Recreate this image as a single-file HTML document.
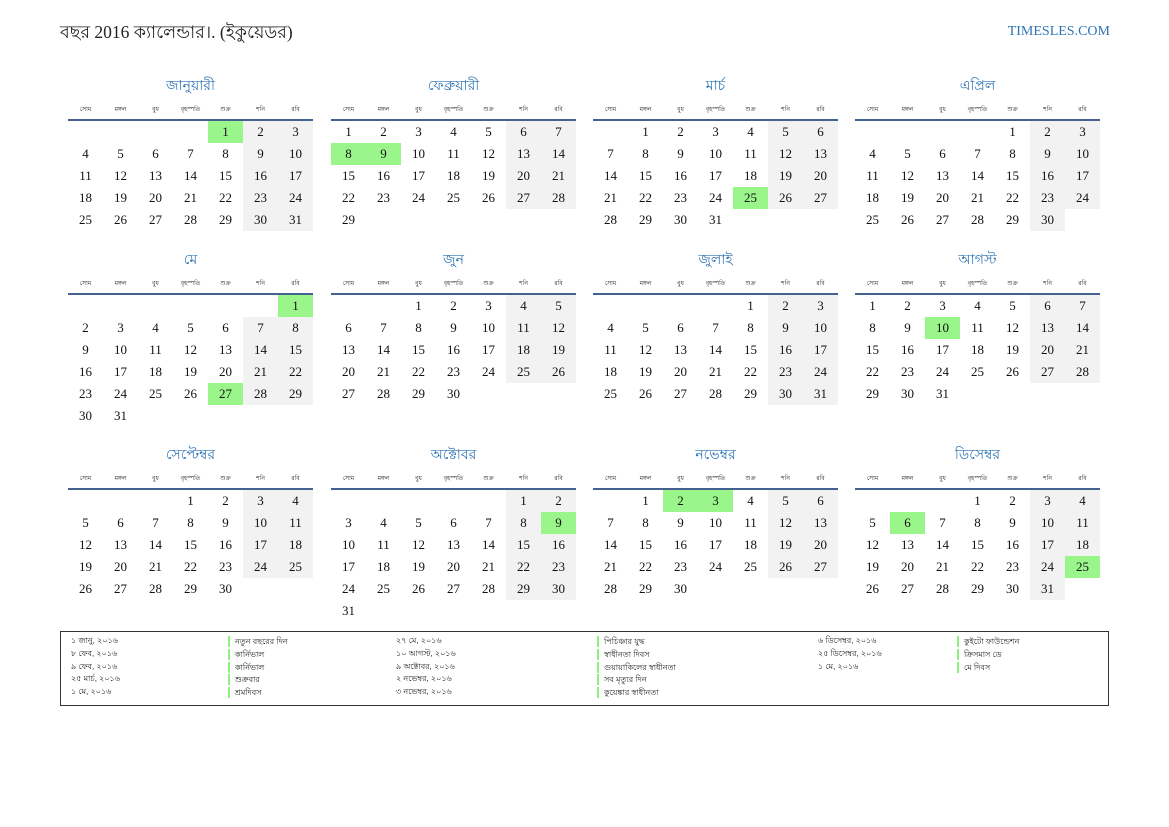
<!DOCTYPE html>
<html><head><meta charset="utf-8">
<style>
body{margin:0;width:1169px;height:827px;background:#fff;position:relative;font-family:"Liberation Serif","Noto Serif CJK SC",serif;overflow:hidden}
.t{position:absolute;left:60px;top:20px;font-size:17.5px;color:#222;white-space:nowrap}
.site{position:absolute;right:59px;top:24px;font-size:14px;color:#2e74b5}
.m{position:absolute;width:245px}
.mt{height:20px;line-height:20px;margin-top:3px;text-align:center;color:#2e74b5;font-size:14px}
.dh{margin-top:5px;height:17px;display:flex;border-bottom:2px solid #44618f}
.dh span{width:35px;text-align:center;font-size:6px;line-height:12px;padding-top:2px;color:#222}
table{border-collapse:collapse;table-layout:fixed}
td{width:35px;height:22px;padding:0;text-align:center;font-size:13px;color:#111}
td.w{background:#f2f2f2}
td.g{background:#9af58a}
.lg{position:absolute;left:60px;top:631px;width:1047px;height:73px;border:1.5px solid #333;font-family:"Liberation Sans",sans-serif;font-size:8px;color:#222}
.c{position:absolute;top:3px;line-height:12.8px;white-space:nowrap}
.c div{height:12.8px}
.b div{border-left:2.5px solid #8ef07f;padding-left:5px;height:11px;margin-bottom:1.8px;line-height:11px}
.b{top:4px}
</style></head><body>
<div class="t">বছর 2016 ক্যালেন্ডার।. (ইকুয়েডর)</div>
<div class="site">TIMESLES.COM</div>

<div class="m" style="left:68px;top:74px"><div class="mt">জানুয়ারী</div><div class="dh"><span>সোম</span><span>মঙ্গল</span><span>বুধ</span><span>বৃহস্পতি</span><span>শুক্র</span><span>শনি</span><span>রবি</span></div><table>
<tr><td></td><td></td><td></td><td></td><td class="g">1</td><td class="w">2</td><td class="w">3</td></tr>
<tr><td>4</td><td>5</td><td>6</td><td>7</td><td>8</td><td class="w">9</td><td class="w">10</td></tr>
<tr><td>11</td><td>12</td><td>13</td><td>14</td><td>15</td><td class="w">16</td><td class="w">17</td></tr>
<tr><td>18</td><td>19</td><td>20</td><td>21</td><td>22</td><td class="w">23</td><td class="w">24</td></tr>
<tr><td>25</td><td>26</td><td>27</td><td>28</td><td>29</td><td class="w">30</td><td class="w">31</td></tr></table></div>

<div class="m" style="left:331px;top:74px"><div class="mt">ফেব্রুয়ারী</div><div class="dh"><span>সোম</span><span>মঙ্গল</span><span>বুধ</span><span>বৃহস্পতি</span><span>শুক্র</span><span>শনি</span><span>রবি</span></div><table>
<tr><td>1</td><td>2</td><td>3</td><td>4</td><td>5</td><td class="w">6</td><td class="w">7</td></tr>
<tr><td class="g">8</td><td class="g">9</td><td>10</td><td>11</td><td>12</td><td class="w">13</td><td class="w">14</td></tr>
<tr><td>15</td><td>16</td><td>17</td><td>18</td><td>19</td><td class="w">20</td><td class="w">21</td></tr>
<tr><td>22</td><td>23</td><td>24</td><td>25</td><td>26</td><td class="w">27</td><td class="w">28</td></tr>
<tr><td>29</td><td></td><td></td><td></td><td></td><td></td><td></td></tr></table></div>

<div class="m" style="left:593px;top:74px"><div class="mt">মার্চ</div><div class="dh"><span>সোম</span><span>মঙ্গল</span><span>বুধ</span><span>বৃহস্পতি</span><span>শুক্র</span><span>শনি</span><span>রবি</span></div><table>
<tr><td></td><td>1</td><td>2</td><td>3</td><td>4</td><td class="w">5</td><td class="w">6</td></tr>
<tr><td>7</td><td>8</td><td>9</td><td>10</td><td>11</td><td class="w">12</td><td class="w">13</td></tr>
<tr><td>14</td><td>15</td><td>16</td><td>17</td><td>18</td><td class="w">19</td><td class="w">20</td></tr>
<tr><td>21</td><td>22</td><td>23</td><td>24</td><td class="g">25</td><td class="w">26</td><td class="w">27</td></tr>
<tr><td>28</td><td>29</td><td>30</td><td>31</td><td></td><td></td><td></td></tr></table></div>

<div class="m" style="left:855px;top:74px"><div class="mt">এপ্রিল</div><div class="dh"><span>সোম</span><span>মঙ্গল</span><span>বুধ</span><span>বৃহস্পতি</span><span>শুক্র</span><span>শনি</span><span>রবি</span></div><table>
<tr><td></td><td></td><td></td><td></td><td>1</td><td class="w">2</td><td class="w">3</td></tr>
<tr><td>4</td><td>5</td><td>6</td><td>7</td><td>8</td><td class="w">9</td><td class="w">10</td></tr>
<tr><td>11</td><td>12</td><td>13</td><td>14</td><td>15</td><td class="w">16</td><td class="w">17</td></tr>
<tr><td>18</td><td>19</td><td>20</td><td>21</td><td>22</td><td class="w">23</td><td class="w">24</td></tr>
<tr><td>25</td><td>26</td><td>27</td><td>28</td><td>29</td><td class="w">30</td><td></td></tr></table></div>

<div class="m" style="left:68px;top:248px"><div class="mt">মে</div><div class="dh"><span>সোম</span><span>মঙ্গল</span><span>বুধ</span><span>বৃহস্পতি</span><span>শুক্র</span><span>শনি</span><span>রবি</span></div><table>
<tr><td></td><td></td><td></td><td></td><td></td><td></td><td class="g">1</td></tr>
<tr><td>2</td><td>3</td><td>4</td><td>5</td><td>6</td><td class="w">7</td><td class="w">8</td></tr>
<tr><td>9</td><td>10</td><td>11</td><td>12</td><td>13</td><td class="w">14</td><td class="w">15</td></tr>
<tr><td>16</td><td>17</td><td>18</td><td>19</td><td>20</td><td class="w">21</td><td class="w">22</td></tr>
<tr><td>23</td><td>24</td><td>25</td><td>26</td><td class="g">27</td><td class="w">28</td><td class="w">29</td></tr>
<tr><td>30</td><td>31</td><td></td><td></td><td></td><td></td><td></td></tr></table></div>

<div class="m" style="left:331px;top:248px"><div class="mt">জুন</div><div class="dh"><span>সোম</span><span>মঙ্গল</span><span>বুধ</span><span>বৃহস্পতি</span><span>শুক্র</span><span>শনি</span><span>রবি</span></div><table>
<tr><td></td><td></td><td>1</td><td>2</td><td>3</td><td class="w">4</td><td class="w">5</td></tr>
<tr><td>6</td><td>7</td><td>8</td><td>9</td><td>10</td><td class="w">11</td><td class="w">12</td></tr>
<tr><td>13</td><td>14</td><td>15</td><td>16</td><td>17</td><td class="w">18</td><td class="w">19</td></tr>
<tr><td>20</td><td>21</td><td>22</td><td>23</td><td>24</td><td class="w">25</td><td class="w">26</td></tr>
<tr><td>27</td><td>28</td><td>29</td><td>30</td><td></td><td></td><td></td></tr></table></div>

<div class="m" style="left:593px;top:248px"><div class="mt">জুলাই</div><div class="dh"><span>সোম</span><span>মঙ্গল</span><span>বুধ</span><span>বৃহস্পতি</span><span>শুক্র</span><span>শনি</span><span>রবি</span></div><table>
<tr><td></td><td></td><td></td><td></td><td>1</td><td class="w">2</td><td class="w">3</td></tr>
<tr><td>4</td><td>5</td><td>6</td><td>7</td><td>8</td><td class="w">9</td><td class="w">10</td></tr>
<tr><td>11</td><td>12</td><td>13</td><td>14</td><td>15</td><td class="w">16</td><td class="w">17</td></tr>
<tr><td>18</td><td>19</td><td>20</td><td>21</td><td>22</td><td class="w">23</td><td class="w">24</td></tr>
<tr><td>25</td><td>26</td><td>27</td><td>28</td><td>29</td><td class="w">30</td><td class="w">31</td></tr></table></div>

<div class="m" style="left:855px;top:248px"><div class="mt">আগস্ট</div><div class="dh"><span>সোম</span><span>মঙ্গল</span><span>বুধ</span><span>বৃহস্পতি</span><span>শুক্র</span><span>শনি</span><span>রবি</span></div><table>
<tr><td>1</td><td>2</td><td>3</td><td>4</td><td>5</td><td class="w">6</td><td class="w">7</td></tr>
<tr><td>8</td><td>9</td><td class="g">10</td><td>11</td><td>12</td><td class="w">13</td><td class="w">14</td></tr>
<tr><td>15</td><td>16</td><td>17</td><td>18</td><td>19</td><td class="w">20</td><td class="w">21</td></tr>
<tr><td>22</td><td>23</td><td>24</td><td>25</td><td>26</td><td class="w">27</td><td class="w">28</td></tr>
<tr><td>29</td><td>30</td><td>31</td><td></td><td></td><td></td><td></td></tr></table></div>

<div class="m" style="left:68px;top:443px"><div class="mt">সেপ্টেম্বর</div><div class="dh"><span>সোম</span><span>মঙ্গল</span><span>বুধ</span><span>বৃহস্পতি</span><span>শুক্র</span><span>শনি</span><span>রবি</span></div><table>
<tr><td></td><td></td><td></td><td>1</td><td>2</td><td class="w">3</td><td class="w">4</td></tr>
<tr><td>5</td><td>6</td><td>7</td><td>8</td><td>9</td><td class="w">10</td><td class="w">11</td></tr>
<tr><td>12</td><td>13</td><td>14</td><td>15</td><td>16</td><td class="w">17</td><td class="w">18</td></tr>
<tr><td>19</td><td>20</td><td>21</td><td>22</td><td>23</td><td class="w">24</td><td class="w">25</td></tr>
<tr><td>26</td><td>27</td><td>28</td><td>29</td><td>30</td><td></td><td></td></tr></table></div>

<div class="m" style="left:331px;top:443px"><div class="mt">অক্টোবর</div><div class="dh"><span>সোম</span><span>মঙ্গল</span><span>বুধ</span><span>বৃহস্পতি</span><span>শুক্র</span><span>শনি</span><span>রবি</span></div><table>
<tr><td></td><td></td><td></td><td></td><td></td><td class="w">1</td><td class="w">2</td></tr>
<tr><td>3</td><td>4</td><td>5</td><td>6</td><td>7</td><td class="w">8</td><td class="g">9</td></tr>
<tr><td>10</td><td>11</td><td>12</td><td>13</td><td>14</td><td class="w">15</td><td class="w">16</td></tr>
<tr><td>17</td><td>18</td><td>19</td><td>20</td><td>21</td><td class="w">22</td><td class="w">23</td></tr>
<tr><td>24</td><td>25</td><td>26</td><td>27</td><td>28</td><td class="w">29</td><td class="w">30</td></tr>
<tr><td>31</td><td></td><td></td><td></td><td></td><td></td><td></td></tr></table></div>

<div class="m" style="left:593px;top:443px"><div class="mt">নভেম্বর</div><div class="dh"><span>সোম</span><span>মঙ্গল</span><span>বুধ</span><span>বৃহস্পতি</span><span>শুক্র</span><span>শনি</span><span>রবি</span></div><table>
<tr><td></td><td>1</td><td class="g">2</td><td class="g">3</td><td>4</td><td class="w">5</td><td class="w">6</td></tr>
<tr><td>7</td><td>8</td><td>9</td><td>10</td><td>11</td><td class="w">12</td><td class="w">13</td></tr>
<tr><td>14</td><td>15</td><td>16</td><td>17</td><td>18</td><td class="w">19</td><td class="w">20</td></tr>
<tr><td>21</td><td>22</td><td>23</td><td>24</td><td>25</td><td class="w">26</td><td class="w">27</td></tr>
<tr><td>28</td><td>29</td><td>30</td><td></td><td></td><td></td><td></td></tr></table></div>

<div class="m" style="left:855px;top:443px"><div class="mt">ডিসেম্বর</div><div class="dh"><span>সোম</span><span>মঙ্গল</span><span>বুধ</span><span>বৃহস্পতি</span><span>শুক্র</span><span>শনি</span><span>রবি</span></div><table>
<tr><td></td><td></td><td></td><td>1</td><td>2</td><td class="w">3</td><td class="w">4</td></tr>
<tr><td>5</td><td class="g">6</td><td>7</td><td>8</td><td>9</td><td class="w">10</td><td class="w">11</td></tr>
<tr><td>12</td><td>13</td><td>14</td><td>15</td><td>16</td><td class="w">17</td><td class="w">18</td></tr>
<tr><td>19</td><td>20</td><td>21</td><td>22</td><td>23</td><td class="w">24</td><td class="g">25</td></tr>
<tr><td>26</td><td>27</td><td>28</td><td>29</td><td>30</td><td class="w">31</td><td></td></tr></table></div>

<div class="lg">
<div class="c" style="left:10px"><div>১ জানু, ২০১৬</div><div>৮ ফেব, ২০১৬</div><div>৯ ফেব, ২০১৬</div><div>২৫ মার্চ, ২০১৬</div><div>১ মে, ২০১৬</div></div>
<div class="c b" style="left:167px"><div>নতুন বছরের দিন</div><div>কার্নিভাল</div><div>কার্নিভাল</div><div>শুক্রবার</div><div>শ্রমদিবস</div></div>
<div class="c" style="left:335px"><div>২৭ মে, ২০১৬</div><div>১০ আগস্ট, ২০১৬</div><div>৯ অক্টোবর, ২০১৬</div><div>২ নভেম্বর, ২০১৬</div><div>৩ নভেম্বর, ২০১৬</div></div>
<div class="c b" style="left:536px"><div>পিচিঞ্চার যুদ্ধ</div><div>স্বাধীনতা দিবস</div><div>গুয়ায়াকিলের স্বাধীনতা</div><div>সব মৃত্যুর দিন</div><div>কুয়েঙ্কার স্বাধীনতা</div></div>
<div class="c" style="left:757px"><div>৬ ডিসেম্বর, ২০১৬</div><div>২৫ ডিসেম্বর, ২০১৬</div><div>১ মে, ২০১৬</div></div>
<div class="c b" style="left:896px"><div>কুইটো ফাউন্ডেশন</div><div>ক্রিসমাস ডে</div><div>মে দিবস</div></div>
</div>
</body></html>
